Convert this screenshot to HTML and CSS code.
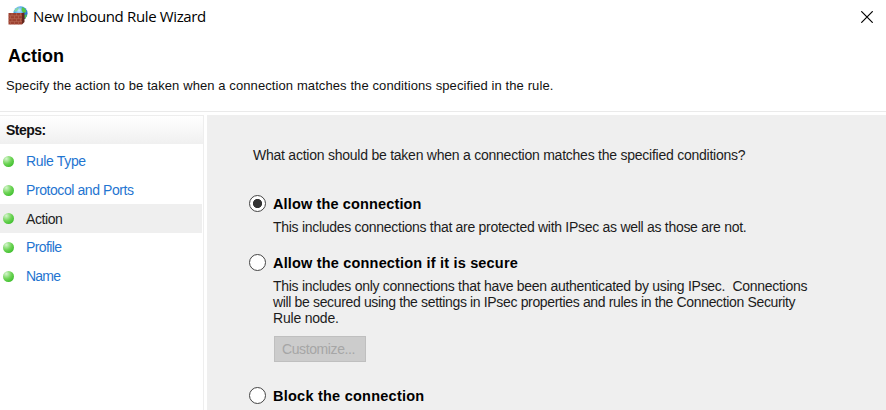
FILE: index.html
```html
<!DOCTYPE html>
<html lang="en">
<head>
<meta charset="utf-8">
<title>New Inbound Rule Wizard</title>
<link rel="stylesheet" href="styles.css">
</head>
<body>
<header class="titlebar">
  <svg class="app-icon" width="20" height="20" viewBox="0 0 20 20">
    <defs><radialGradient id="globe" cx=".4" cy=".3" r=".75"><stop offset="0" stop-color="#c7ecff"/><stop offset=".5" stop-color="#3c9be8"/><stop offset="1" stop-color="#1557b8"/></radialGradient></defs>
    <circle cx="12.5" cy="7.300" r="7" fill="url(#globe)"/>
    <path d="M14 1l3 1.500 1.500 3-2 1.500-2-1-1-2zM16.500 9l2-.5.3 1-1.500 3.500-1-1.500z" fill="#58c748"/>
    <path d="M7 3.500l3-2 1 .5-2 3-3 1z" fill="#8adba0"/>
    <path d="M.5 7h13.500v11.500H.5z" fill="#9c4130"/>
    <path d="M14 7l2.500-.5v9.500l-2.500 2.500z" fill="#65271d"/>
    <path d="M.5 9.800h13.500M.5 12.700h13.500M.5 15.600h13.500M4 7v2.800M8.500 7v2.800M12.500 7v2.800M2.500 9.800v2.900M6.500 9.800v2.900M10.500 9.800v2.900M4 12.700v2.900M8.500 12.700v2.900M12.500 12.700v2.900M2.500 15.600v2.900M6.500 15.600v2.900M10.500 15.600v2.900" fill="none" stroke="#b86b58" stroke-width=".6"/>
  </svg>
  <span class="window-title">New Inbound Rule Wizard</span>
  <svg class="close" width="12" height="12" viewBox="0 0 12 12"><path d="M.3.300l11.400 11.400M11.700.300L.3 11.700" stroke="#000" stroke-width="1.200"/></svg>
</header>
<section class="intro">
  <h1>Action</h1>
  <p>Specify the action to be taken when a connection matches the conditions specified in the rule.</p>
</section>
<div class="body">
  <nav class="steps">
    <h2>Steps:</h2>
    <ul>
      <li><i class="dot"></i><span class="s1">Rule Type</span></li>
      <li><i class="dot"></i><span class="s2">Protocol and Ports</span></li>
      <li class="current"><i class="dot"></i><span class="s3">Action</span></li>
      <li><i class="dot"></i><span class="s4">Profile</span></li>
      <li><i class="dot"></i><span class="s5">Name</span></li>
    </ul>
  </nav>
  <main class="content">
    <p class="question">What action should be taken when a connection matches the specified conditions?</p>
    <div class="option first">
      <i class="radio checked"></i>
      <div><h3 class="t1">Allow the connection</h3><p class="d1">This includes connections that are protected with IPsec as well as those are not.</p></div>
    </div>
    <div class="option second">
      <i class="radio"></i>
      <div><h3 class="t2">Allow the connection if it is secure</h3><p><span class="d2">This includes only connections that have been authenticated by using IPsec.&nbsp; Connections</span><br><span class="d3">will be secured using the settings in IPsec properties and rules in the Connection Security</span><br><span class="d4">Rule node.</span></p>
      <button disabled>Customize...</button></div>
    </div>
    <div class="option third">
      <i class="radio"></i>
      <div><h3 class="t3">Block the connection</h3></div>
    </div>
  </main>
</div>
</body>
</html>
```
FILE: styles.css
```css
* { box-sizing: border-box; margin: 0; padding: 0; }
body { width: 886px; height: 410px; overflow: hidden; background: #fff; color: #1c1c1c; font: 14px/16px "Liberation Sans", Arial, sans-serif; white-space: nowrap; }
.titlebar { height: 34px; display: flex; align-items: center; padding: 0 13px 0 8px; }
.app-icon { margin-top: -2px; }
.window-title { margin: -2px 0 0 5px; font: 15px/20px "Open Sans", sans-serif; letter-spacing: -.36px; color: #000; }
.close { margin-left: auto; }
.intro { height: 78px; padding: 12px 6px 0; border-bottom: 1px solid #eaeaea; }
.intro h1 { font-size: 18px; line-height: 20px; margin-left: 2px; letter-spacing: 0; color: #000; }
.intro p { font-size: 13px; line-height: 16px; margin-top: 12px; letter-spacing: .096px; color: #111; }
.body { display: flex; gap: 3px; height: 298px; padding-top: 3px; }
.steps { width: 204px; border-top: 1px solid #eee; border-right: 1px solid #eee; }
.steps h2 { height: 28px; padding-left: 6px; font-size: 14px; line-height: 29px; letter-spacing: -.5px; background: linear-gradient(#fff, #f0f0f0); color: #111; }
.steps ul { list-style: none; padding-top: 3px; }
.steps li { height: 28.7px; width: 202px; display: flex; align-items: center; padding-left: 3px; color: #1f75d1; }
.steps li.current { background: #efefef; color: #222; }
.steps li span { margin-left: 12px; }
.steps .s1 { letter-spacing: -.33px; }
.steps .s2 { letter-spacing: -.42px; }
.steps .s3 { letter-spacing: -.4px; }
.steps .s4 { letter-spacing: -.6px; }
.steps .s5 { letter-spacing: -.8px; }
.dot { width: 11px; height: 11px; border-radius: 50%; background: radial-gradient(circle at 30% 25%, #d5f5cd, #6fd457 45%, #45c233 75%, #8ad27f); }
.content { flex: 1; padding: 32px 0 0 42px; background: #efefef; }
.question { margin-left: 4px; letter-spacing: -.24px; }
.option { display: flex; }
.option.first { margin-top: 33px; height: 59px; }
.option.second { height: 133px; }
.option h3 { font-size: 14.5px; line-height: 17px; color: #000; }
.option .t1 { letter-spacing: .14px; }
.option .t2 { letter-spacing: .18px; }
.option .t3 { letter-spacing: .24px; }
.option p { margin-top: 6px; }
.d1 { letter-spacing: -.285px; }
.d2 { letter-spacing: -.28px; }
.d3 { letter-spacing: -.35px; }
.d4 { letter-spacing: -.2px; }
.radio { flex: none; width: 17px; height: 17px; margin: -1px 7px 0 0; border: 1.5px solid #444; border-radius: 50%; background: #fff; }
.radio.checked { background: radial-gradient(circle, #333 4.200px, #fff 5px); }
button { display: block; width: 92px; height: 26px; margin: 10px 0 0 1px; padding-right: 3px; border: 1px solid #bfbfbf; background: #ccc; color: #a6a6a6; font: inherit; letter-spacing: -.4px; }
```
